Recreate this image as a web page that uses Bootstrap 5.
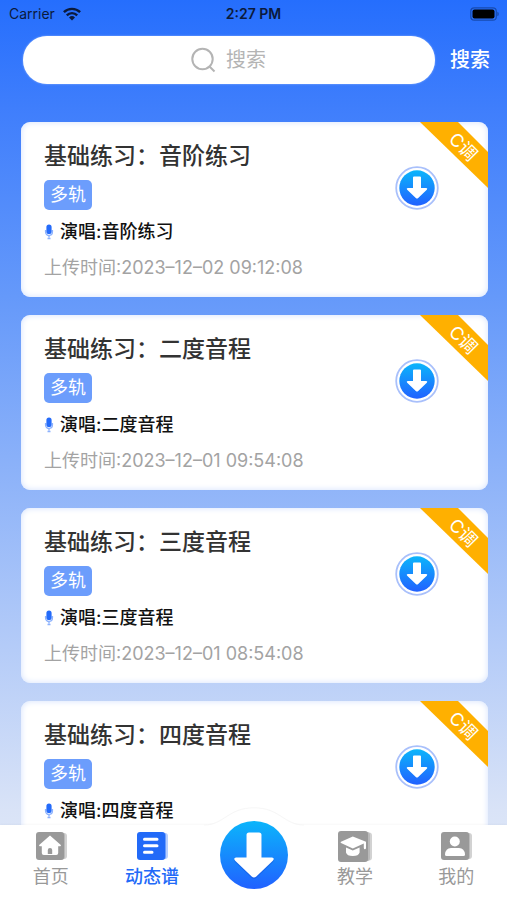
<!DOCTYPE html>
<html lang="zh-CN">
<head>
<meta charset="utf-8">
<meta name="viewport" content="width=device-width, initial-scale=1">
<title>动态谱</title>
<link href="https://cdn.jsdelivr.net/npm/bootstrap@5.3.0/dist/css/bootstrap.min.css" rel="stylesheet">
<style>
  body {
    font-family: Inter, "Noto Sans CJK SC", sans-serif;
    background: linear-gradient(#256efd 0%, #3f7efc 12%, #6599fa 33%, #d9e3f7 90%, #e4ebf8 100%);
  }
  .status-bar { height: 28px; padding: 0 8px 0 9px; font-size: 14px; line-height: 28px; color: #0b1a3c; }
  .search-row { padding: 8px 10px 0 23px; gap: 8px; }
  .search-box { height: 48px; }
  .search-box input { padding: 0 0 0 34px; font-size: 20px; box-shadow: 0 0 2px #ffffff80; }
  .search-box input::placeholder { color: #b4b4b4; }
  .search-box svg { position: absolute; top: 11px; left: calc(50% - 39px); pointer-events: none; }
  .search-btn { font-size: 20px; line-height: 26px; padding: 0 7px; font-weight: 500; color: #fff; border: 0; }
  .score-list { padding: 38px 19px 0 21px; gap: 18px; scrollbar-width: none; min-height: 0; }
  .score-list::-webkit-scrollbar { display: none; }
  .score-card {
    flex: none; height: 175px; padding: 19px 49px 0 23px; border: 0; border-radius: 9px;
    overflow: hidden; box-shadow: inset 0 0 6px #d3e1fd;
  }
  .score-title { font-size: 23px; line-height: 30px; font-weight: 500; color: #333; margin: 0 0 9px; }
  .track-tag { font-size: 18px; line-height: 30px; padding: 0 6px; border-radius: 5px; background: #6c9dfc; color: #fff; }
  .singer { font-size: 18px; line-height: 26px; font-weight: 500; color: #111; margin-top: 9px; gap: 6px; }
  .upload-time { font-size: 18px; line-height: 26px; color: #a3a3a3; margin-top: 10px; }
  .key-ribbon { position: absolute; top: 0; right: 0; }
  .key-ribbon text { font-size: 18px; fill: #fff; }
  .get-btn { margin-top: 25px; width: 44px; height: 44px; }
  .tab-bar { flex: none; height: 75px; background: #fff; box-shadow: 0 -1px 2px #00000008; }
  .tab-bar a { flex: 1 1 0; font-size: 18px; line-height: 24px; padding-top: 5px; color: #999; }
  .tab-bar a.active { color: #226af8; font-weight: 500; }
  .tab-bar a span { margin-top: 3px; }
  .tab-bump { position: absolute; left: calc(50% - 50px); top: -18px; }
</style>
</head>
<body class="vh-100 d-flex flex-column overflow-hidden">
<svg width="0" height="0" class="position-absolute" aria-hidden="true">
  <defs>
    <linearGradient id="blue" x1="0" y1="0" x2="0" y2="1"><stop offset="0" stop-color="#0bb5fb"/><stop offset="1" stop-color="#2161ff"/></linearGradient>
    <symbol id="mic" viewBox="0 0 10 18">
      <path d="M1.600 7v2a3.400 3.400 0 0 0 6.800 0V7M5 12.500v2M3.500 15.500h3" fill="none" stroke="#8db2fd" stroke-width="1.400"/>
      <rect x="2.400" y="1.500" width="5.200" height="9.500" rx="2.600" fill="#246bfa"/>
    </symbol>
    <symbol id="get" viewBox="0 0 44 44">
      <circle cx="22" cy="22" r="20.800" fill="#fff" stroke="#a9c0fb" stroke-width="1.800"/>
      <circle cx="22" cy="22" r="17.700" fill="url(#blue)"/>
      <path d="M19 10.500h6q1 0 1 1V22h5q2 .3.8 1.800l-8.600 8.300q-1.200 1-2.400 0l-8.600-8.300Q11 22.300 13 22h5V11.500q0-1 1-1z" fill="#fff"/>
    </symbol>
    <symbol id="ribbon" viewBox="0 0 68 66"><path d="M0 0h38l30 30v36z" fill="#ffb000"/></symbol>
  </defs>
</svg>

<header>
  <div class="status-bar d-flex justify-content-between position-relative">
    <div class="d-flex align-items-center">
      <span>Carrier</span>
      <svg class="ms-2" width="18" height="14" viewBox="0 0 18 14" fill="none" stroke="#0b1a3c" stroke-width="2.400"><path d="M.9 5.200a11.500 11.500 0 0 1 16.200 0M3.800 8.300a7.300 7.300 0 0 1 10.400 0"/><path d="M9 13.500 6 10.500a4.300 4.300 0 0 1 6 0z" fill="#0b1a3c" stroke="none"/></svg>
    </div>
    <span class="position-absolute start-50 translate-middle-x fw-semibold">2:27 PM</span>
    <svg class="align-self-center" width="29" height="14" viewBox="0 0 29 14"><rect x=".8" y=".8" width="25.500" height="12.400" rx="3.500" fill="none" stroke="#174bb0" stroke-width="1.200"/><rect x="2.500" y="2.500" width="22" height="9" rx="2" fill="#000"/><path d="M27.300 4.800q1.500.5 1.500 2.200t-1.500 2.200z" fill="#174bb0"/></svg>
  </div>
  <form class="search-row d-flex align-items-center">
    <div class="search-box flex-fill position-relative">
      <input class="form-control h-100 border-0 rounded-pill text-center" type="text" placeholder="搜索" aria-label="搜索">
      <svg width="26" height="26" viewBox="0 0 26 26" fill="none" stroke="#b4b4b4" stroke-width="2"><circle cx="12.500" cy="12" r="10.200"/><path d="m19.500 19.500 5 5"/></svg>
    </div>
    <button class="search-btn btn" type="button">搜索</button>
  </form>
</header>

<main class="score-list flex-fill overflow-auto d-flex flex-column">
  <article class="score-card card flex-row justify-content-between">
    <div>
      <h2 class="score-title">基础练习：音阶练习</h2>
      <span class="track-tag d-inline-block align-top">多轨</span>
      <div class="singer d-flex align-items-center"><svg width="10" height="18"><use href="#mic"/></svg>演唱:音阶练习</div>
      <div class="upload-time text-nowrap">上传时间:2023–12–02 09:12:08</div>
    </div>
    <button class="get-btn btn border-0 p-0 d-flex" type="button" aria-label="下载"><svg width="44" height="44"><use href="#get"/></svg></button>
    <svg class="key-ribbon" width="68" height="66"><use href="#ribbon"/><text transform="translate(43 25) rotate(45)" text-anchor="middle" y="6">C调</text></svg>
  </article>
  <article class="score-card card flex-row justify-content-between">
    <div>
      <h2 class="score-title">基础练习：二度音程</h2>
      <span class="track-tag d-inline-block align-top">多轨</span>
      <div class="singer d-flex align-items-center"><svg width="10" height="18"><use href="#mic"/></svg>演唱:二度音程</div>
      <div class="upload-time text-nowrap">上传时间:2023–12–01 09:54:08</div>
    </div>
    <button class="get-btn btn border-0 p-0 d-flex" type="button" aria-label="下载"><svg width="44" height="44"><use href="#get"/></svg></button>
    <svg class="key-ribbon" width="68" height="66"><use href="#ribbon"/><text transform="translate(43 25) rotate(45)" text-anchor="middle" y="6">C调</text></svg>
  </article>
  <article class="score-card card flex-row justify-content-between">
    <div>
      <h2 class="score-title">基础练习：三度音程</h2>
      <span class="track-tag d-inline-block align-top">多轨</span>
      <div class="singer d-flex align-items-center"><svg width="10" height="18"><use href="#mic"/></svg>演唱:三度音程</div>
      <div class="upload-time text-nowrap">上传时间:2023–12–01 08:54:08</div>
    </div>
    <button class="get-btn btn border-0 p-0 d-flex" type="button" aria-label="下载"><svg width="44" height="44"><use href="#get"/></svg></button>
    <svg class="key-ribbon" width="68" height="66"><use href="#ribbon"/><text transform="translate(43 25) rotate(45)" text-anchor="middle" y="6">C调</text></svg>
  </article>
  <article class="score-card card flex-row justify-content-between">
    <div>
      <h2 class="score-title">基础练习：四度音程</h2>
      <span class="track-tag d-inline-block align-top">多轨</span>
      <div class="singer d-flex align-items-center"><svg width="10" height="18"><use href="#mic"/></svg>演唱:四度音程</div>
    </div>
    <button class="get-btn btn border-0 p-0 d-flex" type="button" aria-label="下载"><svg width="44" height="44"><use href="#get"/></svg></button>
    <svg class="key-ribbon" width="68" height="66"><use href="#ribbon"/><text transform="translate(43 25) rotate(45)" text-anchor="middle" y="6">C调</text></svg>
  </article>
</main>

<nav class="tab-bar d-flex position-relative text-center">
  <a class="d-flex flex-column align-items-center text-decoration-none" href="#">
    <svg width="32" height="32" viewBox="0 0 32 32"><rect x="6" y="3" width="26" height="26" rx="3" fill="#d2d2d2"/><rect x="4" y="2.500" width="26" height="27" rx="3" fill="#b9b9b9"/><rect x="1" y="2" width="28" height="28" rx="3" fill="#999"/><path d="M15 5.500 4.200 15q-.5 1.200.8 1.200h1.800V23q0 2 2 2h12.400q2 0 2-2v-6.800H25q1.300 0 .8-1.200z" fill="#fff"/><path d="M12.800 24v-4q0-2 2.200-2t2.200 2v4z" fill="#999"/></svg>
    <span>首页</span>
  </a>
  <a class="active d-flex flex-column align-items-center text-decoration-none" href="#" aria-current="page">
    <svg width="32" height="32" viewBox="0 0 32 32"><rect x="6" y="3" width="26" height="26" rx="3" fill="#b9cffd"/><rect x="4" y="2.500" width="26" height="27" rx="3" fill="#6c9dfc"/><rect x="1" y="2" width="28" height="28" rx="3" fill="#226af8"/><path d="M8.500 9.200h12.500M8.500 15.700h12.500M8.500 22.200h7.500" stroke="#fff" stroke-width="3" stroke-linecap="round"/></svg>
    <span>动态谱</span>
  </a>
  <a class="p-0" href="#" aria-label="下载">
    <svg class="tab-bump" width="100" height="93" viewBox="0 0 100 93"><path d="M0 18.500C20 18.500 24 1 50 1s30 17.500 50 17.500V93H0z" fill="#fff"/><path d="M0 18C20 18 24 .8 50 .8S80 18 100 18" fill="none" stroke="#f6f6f6"/><circle cx="50" cy="48" r="34" fill="url(#blue)"/><path d="M45 25.500h10q2.500 0 2.500 2.500v22.500H68q3 .5.8 3.300L52.300 69.500q-2.300 2-4.600 0L31.200 53.800Q29 51 32 50.500h10.500V28q0-2.500 2.500-2.500z" fill="#1455da" opacity=".5" transform="translate(0 1.500)"/><path d="M45 25.500h10q2.500 0 2.500 2.500v22.500H68q3 .5.8 3.300L52.300 69.500q-2.300 2-4.600 0L31.200 53.800Q29 51 32 50.500h10.500V28q0-2.500 2.500-2.500z" fill="#fff"/></svg>
  </a>
  <a class="d-flex flex-column align-items-center text-decoration-none" href="#">
    <svg width="36" height="32" viewBox="0 0 36 32"><rect x="8" y="2.500" width="27" height="28" rx="3" fill="#d2d2d2"/><rect x="6" y="2" width="27" height="29" rx="3" fill="#b9b9b9"/><rect x="1" y="1" width="30" height="31" rx="3" fill="#999"/><path d="M15.800 6.500 4 11.700q-1 .6 0 1.300l11.800 5.400 11-4.900v4.300q0 1.500 1.100 1.500t1.100-1.500v-6z" fill="#fff"/><path d="M9 17.500l6.800 3 6.800-3v5q-1 3.500-6.800 3.500T9 22.500z" fill="#fff"/></svg>
    <span>教学</span>
  </a>
  <a class="d-flex flex-column align-items-center text-decoration-none" href="#">
    <svg width="32" height="32" viewBox="0 0 32 32"><rect x="6" y="3" width="26" height="26" rx="3" fill="#d2d2d2"/><rect x="4" y="2.500" width="26" height="27" rx="3" fill="#b9b9b9"/><rect x="1" y="2" width="28" height="28" rx="3" fill="#999"/><circle cx="14.800" cy="11.500" r="5" fill="#fff"/><path d="M5 24.500Q5.500 18 11 18h8q5.500 0 6 6.500 0 1.500-1.500 1.500h-17Q5 26 5 24.500z" fill="#fff"/></svg>
    <span>我的</span>
  </a>
</nav>
<script src="https://cdn.jsdelivr.net/npm/bootstrap@5.3.0/dist/js/bootstrap.bundle.min.js"></script>
</body>
</html>
